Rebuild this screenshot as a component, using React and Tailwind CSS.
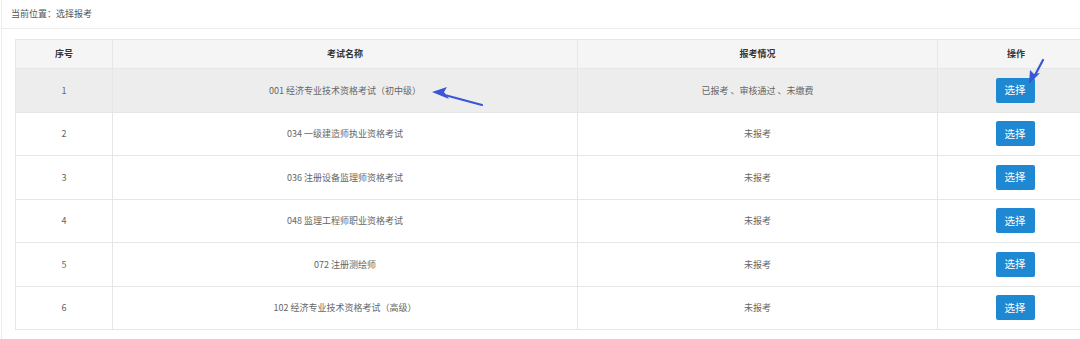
import React from "react";

const rows = [
  { no: "1", name: "001 经济专业技术资格考试（初中级）", status: "已报考 、审核通过 、未缴费", active: true },
  { no: "2", name: "034 一级建造师执业资格考试", status: "未报考" },
  { no: "3", name: "036 注册设备监理师资格考试", status: "未报考" },
  { no: "4", name: "048 监理工程师职业资格考试", status: "未报考" },
  { no: "5", name: "072 注册测绘师", status: "未报考" },
  { no: "6", name: "102 经济专业技术资格考试（高级）", status: "未报考" },
];

export default function App() {
  return (
    <div
      className="relative w-[1080px] h-[339px] overflow-hidden bg-white text-[#666]"
      style={{ fontFamily: '"Noto Sans CJK SC", "Noto Sans", sans-serif' }}
    >
      <div className="ml-[1px] h-full border-l border-[#ececec]">
        <div className="h-[29px] border-b border-[#ececec] pl-[9px] flex items-center text-[9px] text-[#555]">
          当前位置：选择报考
        </div>
        <div className="pl-[13px] pt-[10px]">
          <table className="w-[1080px] border-collapse table-fixed text-[9px]">
            <colgroup>
              <col className="w-[97px]" />
              <col className="w-[465px]" />
              <col className="w-[360px]" />
              <col />
            </colgroup>
            <thead>
              <tr className="h-[29px] bg-[#f5f5f5] text-[#333] font-bold">
                <th className="border border-[#e6e6e6] font-bold">序号</th>
                <th className="border border-[#e6e6e6] font-bold">考试名称</th>
                <th className="border border-[#e6e6e6] font-bold">报考情况</th>
                <th className="border border-[#e6e6e6] font-bold">操作</th>
              </tr>
            </thead>
            <tbody>
              {rows.map((r) => (
                <tr key={r.no} className={`h-[43.5px] ${r.active ? "bg-[#ededed]" : "bg-white"}`}>
                  <td className="border border-[#e6e6e6] text-center">{r.no}</td>
                  <td className="border border-[#e6e6e6] text-center">{r.name}</td>
                  <td className="border border-[#e6e6e6] text-center">{r.status}</td>
                  <td className="border border-[#e6e6e6] text-center">
                    <button className="inline-flex items-center justify-center w-[39px] h-[25px] rounded-[2px] bg-[#1f88d2] text-white text-[10.5px] ml-[-2px]">
                      选择
                    </button>
                  </td>
                </tr>
              ))}
            </tbody>
          </table>
        </div>
      </div>

      <svg className="absolute left-0 top-0 pointer-events-none" width="1080" height="339">
        <path d="M482 105 L441 94" stroke="#3a56d6" strokeWidth="2.2" strokeLinecap="round" fill="none" />
        <path d="M432 92 L447 87 L444 92 L449 99 Z" fill="#3a56d6" />
        <path d="M1043 60 L1034 77" stroke="#3a56d6" strokeWidth="2.2" strokeLinecap="round" fill="none" />
        <path d="M1029 84 L1030 70 L1034 74 L1040 73 Z" fill="#3a56d6" />
      </svg>
    </div>
  );
}
